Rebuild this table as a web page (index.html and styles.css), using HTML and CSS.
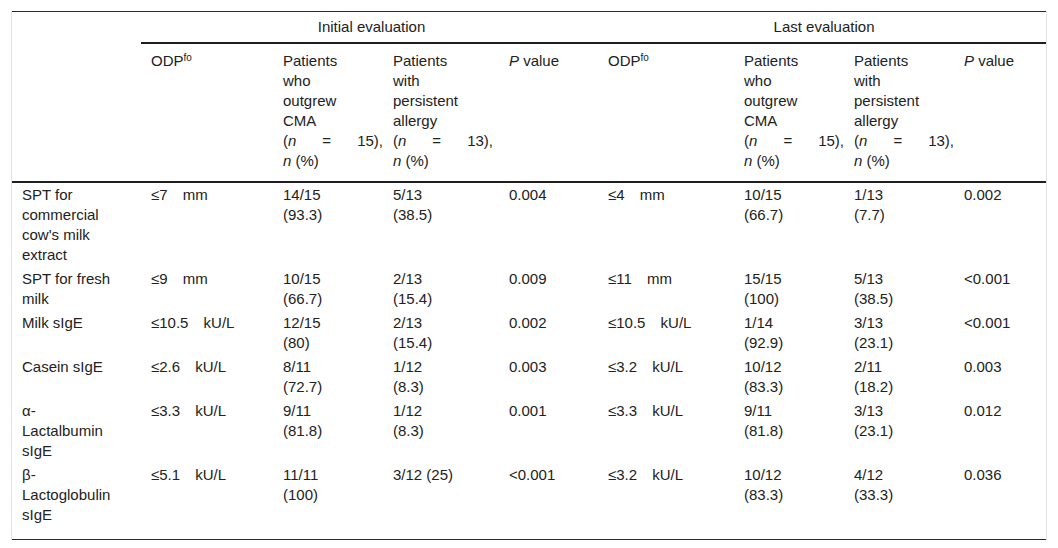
FILE: index.html
```html
<!DOCTYPE html>
<html lang="en">
<head>
<meta charset="utf-8">
<title>Table</title>
<link rel="stylesheet" href="styles.css">
</head>
<body>
<div class="wrap">
<table class="tbl">
<colgroup>
<col class="c1"><col class="c2"><col class="c3"><col class="c4"><col class="c5"><col class="c6"><col class="c7"><col class="c8"><col class="c9">
</colgroup>
<thead>
<tr class="grp">
<th class="stub" rowspan="2"></th>
<th class="grp-h" colspan="4">Initial evaluation</th>
<th class="grp-h" colspan="4">Last evaluation</th>
</tr>
<tr class="sub">
<th>ODP<sup>fo</sup></th>
<th>Patients who outgrew CMA <span class="eq"><span>(<i>n</i></span><span>=</span><span>15),</span></span> <i>n</i> (%)</th>
<th>Patients with persistent allergy <span class="eq"><span>(<i>n</i></span><span>=</span><span>13),</span></span> <i>n</i> (%)</th>
<th class="pv"><i>P</i> value</th>
<th>ODP<sup>fo</sup></th>
<th>Patients who outgrew CMA <span class="eq"><span>(<i>n</i></span><span>=</span><span>15),</span></span> <i>n</i> (%)</th>
<th>Patients with persistent allergy <span class="eq"><span>(<i>n</i></span><span>=</span><span>13),</span></span> <i>n</i> (%)</th>
<th class="pv"><i>P</i> value</th>
</tr>
</thead>
<tbody>
<tr>
<td>SPT for commercial cow's milk extract</td>
<td class="odp">≤7 mm</td><td>14/15 (93.3)</td><td>5/13 (38.5)</td><td class="pv">0.004</td>
<td class="odp">≤4 mm</td><td>10/15 (66.7)</td><td>1/13 (7.7)</td><td class="pv">0.002</td>
</tr>
<tr>
<td>SPT for fresh milk</td>
<td class="odp">≤9 mm</td><td>10/15 (66.7)</td><td>2/13 (15.4)</td><td class="pv">0.009</td>
<td class="odp">≤11 mm</td><td>15/15 (100)</td><td>5/13 (38.5)</td><td class="pv">&lt;0.001</td>
</tr>
<tr>
<td>Milk sIgE</td>
<td class="odp">≤10.5 kU/L</td><td>12/15 (80)</td><td>2/13 (15.4)</td><td class="pv">0.002</td>
<td class="odp">≤10.5 kU/L</td><td>1/14 (92.9)</td><td>3/13 (23.1)</td><td class="pv">&lt;0.001</td>
</tr>
<tr>
<td>Casein sIgE</td>
<td class="odp">≤2.6 kU/L</td><td>8/11 (72.7)</td><td>1/12 (8.3)</td><td class="pv">0.003</td>
<td class="odp">≤3.2 kU/L</td><td>10/12 (83.3)</td><td>2/11 (18.2)</td><td class="pv">0.003</td>
</tr>
<tr>
<td>α-Lactalbumin sIgE</td>
<td class="odp">≤3.3 kU/L</td><td>9/11 (81.8)</td><td>1/12 (8.3)</td><td class="pv">0.001</td>
<td class="odp">≤3.3 kU/L</td><td>9/11 (81.8)</td><td>3/13 (23.1)</td><td class="pv">0.012</td>
</tr>
<tr class="last">
<td>β-Lactoglobulin sIgE</td>
<td class="odp">≤5.1 kU/L</td><td>11/11 (100)</td><td>3/12 (25)</td><td class="pv">&lt;0.001</td>
<td class="odp">≤3.2 kU/L</td><td>10/12 (83.3)</td><td>4/12 (33.3)</td><td class="pv">0.036</td>
</tr>
</tbody>
</table>
</div>
</body>
</html>
```
FILE: styles.css
```css
html, body {
  margin: 0;
  padding: 0;
  background: #ffffff;
}

body {
  font-family: "Liberation Sans", Arial, sans-serif;
  font-size: 15px;
  line-height: 20px;
  color: #222222;
}

.wrap {
  margin: 11px 11px 0 11px;
  width: 1034px;
  border-left: 1px solid #e4e4e4;
  border-right: 1px solid #e4e4e4;
}

.tbl {
  width: 100%;
  table-layout: fixed;
  border-collapse: collapse;
  border-top: 1px solid #2a2a2a;
  border-bottom: 1px solid #2a2a2a;
}

.c1 { width: 129px; }
.c2 { width: 132px; }
.c3 { width: 110px; }
.c4 { width: 116px; }
.c5 { width: 99px; }
.c6 { width: 136px; }
.c7 { width: 110px; }
.c8 { width: 110px; }
.c9 { width: 92px; }

.tbl th,
.tbl td {
  padding: 2px 30px 2px 10px;
  vertical-align: top;
  text-align: left;
  font-weight: normal;
}

.tbl tbody td:nth-child(3),
.tbl tbody td:nth-child(7),
.tbl tbody td:nth-child(8),
.tbl .sub th:nth-child(2),
.tbl .sub th:nth-child(6),
.tbl .sub th:nth-child(7) {
  padding-right: 38px;
}

.tbl tbody td:nth-child(4),
.tbl .sub th:nth-child(3) {
  padding-right: 44px;
}

.tbl .pv {
  padding-right: 10px;
}

.tbl .grp th {
  padding-top: 5px;
  padding-bottom: 5px;
}

.tbl .grp .grp-h {
  padding-left: 12px;
  padding-right: 8px;
  text-align: center;
  border-bottom: 2px solid #1e1e1e;
}

.tbl .sub th {
  padding-top: 7px;
  padding-bottom: 10px;
  border-bottom: 2px solid #1e1e1e;
}

.tbl .stub {
  border-bottom: 2px solid #1e1e1e;
}

.eq {
  display: flex;
  justify-content: space-between;
  width: 100px;
}

.tbl .odp {
  word-spacing: 11px;
}

.tbl tr.last td {
  padding-bottom: 14px;
}

sup {
  font-size: 10px;
  line-height: 0;
  vertical-align: 5px;
}
```
